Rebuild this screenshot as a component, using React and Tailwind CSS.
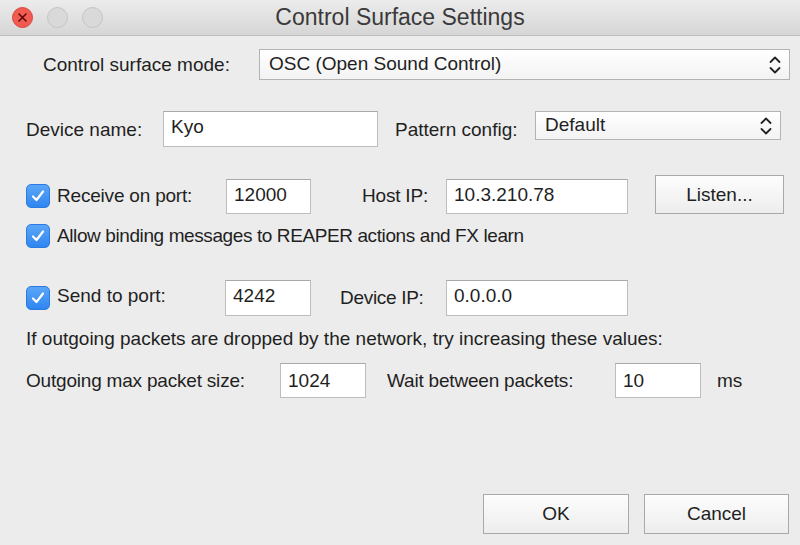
import React from "react";

const Check = () => (
  <div className="w-[24px] h-[24px] rounded-[5px] bg-gradient-to-b from-[#5aa6f8] to-[#2f86f0] border border-[#2a7ae0] flex items-center justify-center shrink-0">
    <svg width="16" height="16" viewBox="0 0 16 16">
      <path d="M3 8.5 L6.5 12 L13 3.5" fill="none" stroke="white" strokeWidth="2.2" strokeLinecap="round" strokeLinejoin="round" />
    </svg>
  </div>
);

const Input = ({ w, h = "h-[35px]", children, extra = "" }) => (
  <div className={`${w} ${h} ${extra} bg-white border border-[#bdbdbd] border-t-[#a9a9a9] flex items-center pl-[7px] pb-[4px] shrink-0`}>
    {children}
  </div>
);

const Arrows = () => (
  <svg width="14" height="22" viewBox="0 0 14 22">
    <path d="M2.5 8 L7 3.5 L11.5 8" fill="none" stroke="#222" strokeWidth="1.8" strokeLinecap="round" strokeLinejoin="round" />
    <path d="M2.5 14 L7 18.5 L11.5 14" fill="none" stroke="#222" strokeWidth="1.8" strokeLinecap="round" strokeLinejoin="round" />
  </svg>
);

const Select = ({ w, h, children }) => (
  <div className={`${w} ${h} bg-gradient-to-b from-[#ffffff] to-[#f3f3f3] border border-[#b3b3b3] flex items-center justify-between pl-[9px] pr-[7px] shrink-0`}>
    <span className="pb-[2px]">{children}</span>
    <Arrows />
  </div>
);

const Button = ({ w, h, children, extra = "" }) => (
  <div className={`${w} ${h} ${extra} bg-gradient-to-b from-[#fdfdfd] to-[#ededed] border border-[#a9a9a9] flex items-center justify-center shrink-0`}>
    {children}
  </div>
);

export default function App() {
  return (
    <div
      className="w-[800px] h-[545px] bg-[#ececec] flex flex-col overflow-hidden text-[19px] text-[#1f1f1f] leading-[22px]"
      style={{ fontFamily: '"Liberation Sans", Arial, sans-serif' }}
    >
      {/* Title bar */}
      <div className="h-[36px] shrink-0 bg-gradient-to-b from-[#ececec] to-[#d6d6d6] border-b border-[#bdbdbd] flex items-center relative">
        <div className="flex items-center pl-[12px] gap-[14px]">
          <div className="w-[21px] h-[21px] rounded-full bg-[#f25b52] border border-[#d9453d] flex items-center justify-center">
            <svg width="11" height="11" viewBox="0 0 11 11">
              <path d="M2 2 L9 9 M9 2 L2 9" stroke="#5a0a06" strokeWidth="1.6" strokeLinecap="round" />
            </svg>
          </div>
          <div className="w-[21px] h-[21px] rounded-full bg-[#d9d9d9] border border-[#c4c4c4]" />
          <div className="w-[21px] h-[21px] rounded-full bg-[#d9d9d9] border border-[#c4c4c4]" />
        </div>
        <div className="absolute inset-0 flex items-center justify-center text-[23px] text-[#3a3a3a] pointer-events-none pb-[1px]">
          Control Surface Settings
        </div>
      </div>

      {/* Content */}
      <div className="flex-1 flex flex-col">
        {/* Row 1 */}
        <div className="flex items-center pl-[43px] mt-[13px] h-[31px]">
          <div className="w-[216px]">Control surface mode:</div>
          <Select w="w-[531px]" h="h-[31px]">OSC (Open Sound Control)</Select>
        </div>

        {/* Row 2 */}
        <div className="flex items-center pl-[26px] mt-[31px] h-[36px]">
          <div className="w-[137px] pt-[1px]">Device name:</div>
          <Input w="w-[215px]" h="h-[36px]">Kyo</Input>
          <div className="w-[140px] ml-[17px] pt-[1px]">Pattern config:</div>
          <div className="self-start">
            <Select w="w-[246px]" h="h-[29px]">Default</Select>
          </div>
        </div>

        {/* Row 3 */}
        <div className="flex items-center pl-[26px] mt-[28px] h-[39px]">
          <div className="w-[200px] flex items-center gap-[7px] mt-[3px]">
            <Check />
            <span className="tracking-[-0.2px]">Receive on port:</span>
          </div>
          <Input w="w-[85px]" extra="mt-[4px]">12000</Input>
          <div className="w-[84px] ml-[51px] mt-[3px] tracking-[-0.2px]">Host IP:</div>
          <Input w="w-[182px]" extra="mt-[4px]">10.3.210.78</Input>
          <Button w="w-[129px]" h="h-[39px]" extra="ml-[27px]">Listen...</Button>
        </div>

        {/* Row 4 */}
        <div className="flex items-center pl-[26px] mt-[10px] h-[24px] gap-[7px]">
          <Check />
          <span className="tracking-[-0.4px]">Allow binding messages to REAPER actions and FX learn</span>
        </div>

        {/* Row 5 */}
        <div className="flex items-center pl-[26px] mt-[32px] h-[36px]">
          <div className="w-[199px] flex items-center gap-[7px]">
            <Check />
            <span className="pb-[4px]">Send to port:</span>
          </div>
          <Input w="w-[86px]" h="h-[36px]">4242</Input>
          <div className="w-[106px] ml-[29px] tracking-[-0.3px]">Device IP:</div>
          <Input w="w-[182px]" h="h-[36px]">0.0.0.0</Input>
        </div>

        {/* Row 6 */}
        <div className="pl-[26px] mt-[12px] h-[22px]">
          If outgoing packets are dropped by the network, try increasing these values:
        </div>

        {/* Row 7 */}
        <div className="flex items-center pl-[26px] mt-[13px] h-[35px]">
          <div className="w-[254px] tracking-[-0.2px]">Outgoing max packet size:</div>
          <Input w="w-[86px]" extra="pt-[4px] pb-0">1024</Input>
          <div className="w-[228px] ml-[21px] tracking-[-0.2px]">Wait between packets:</div>
          <Input w="w-[86px]" extra="pt-[4px] pb-0">10</Input>
          <div className="ml-[16px]">ms</div>
        </div>

        {/* Buttons */}
        <div className="mt-auto flex justify-end gap-[15px] pr-[11px] pb-[11px]">
          <Button w="w-[146px]" h="h-[40px]">OK</Button>
          <Button w="w-[145px]" h="h-[40px]">Cancel</Button>
        </div>
      </div>
    </div>
  );
}
